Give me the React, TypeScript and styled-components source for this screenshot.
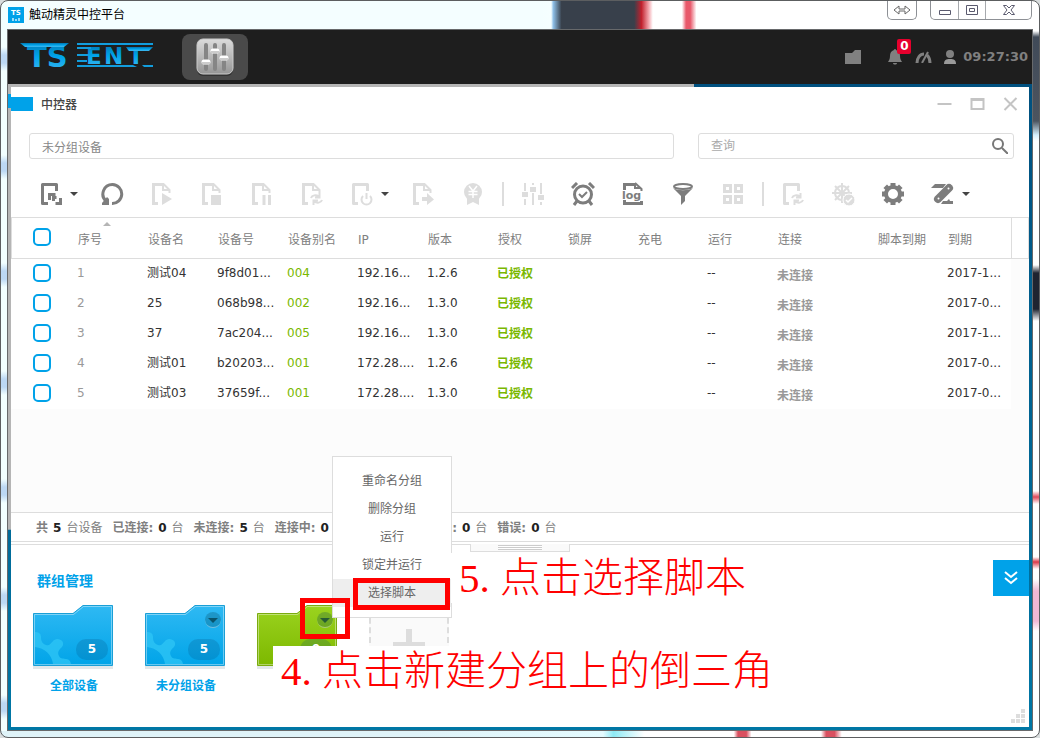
import React from "react";
import styled, { createGlobalStyle } from "styled-components";

const GlobalStyle = createGlobalStyle`
  * { box-sizing: border-box; }
  body {
    margin: 0;
    background: #d8dcdd;
    font: 12px/16px "DejaVu Sans", "Noto Sans CJK SC", sans-serif;
    color: #333;
  }
  button, input { font: inherit; color: inherit; margin: 0; padding: 0; }
  button { border: 0; background: none; cursor: pointer; }
  svg { display: block; }
`;

/* ---------- desktop window frame ---------- */

const Window = styled.div`
  min-height: 100vh;
  display: flex;
  flex-direction: column;
  padding: 0 6px 6px;
  border: 1px solid #5c5e60;
  border-radius: 8px;
  background:
    linear-gradient(90deg, transparent 53%, #8fc0e8 53.2%, #38404b 54%, #38404b 61%, #c0202d 61.7%, #f3a6ae 62.4%, transparent 62.8%, transparent 65.6%, #e8586a 66%, #e8586a 66.4%, transparent 67%) 0 0 / 100% 28px no-repeat,
    linear-gradient(#fff 30px, #404a58 36px, #4c545f 120px, #d5effc 134px, #fff 140px, #fff 264px, #1f2430 272px, #1f2430 308px, #fff 320px, #fff 490px, #e04a5a 496px, #fff 503px, #fff 556px, #d93848 561px, #fff 568px, #fff 578px, #f0b8d4 590px, #f0b8d4 620px, #fff 630px) 100% 0 / 6px 100% no-repeat,
    linear-gradient(90deg, #dff3f8 40%, #e4fbff 58%, #8eeaf5 59%, #fff 62%, #fff 70.6%, #d95060 71%, #d95060 71.8%, #fff 72.3%, #fff 79%, #d95060 79.5%, #d95060 80.3%, #fff 81%) 0 100% / 100% 6px no-repeat,
    repeating-linear-gradient(#f2ffff 0 46px, #bcd8f4 54px 62px, #f2ffff 70px 108px) 0 0 / 6px 100% no-repeat,
    linear-gradient(90deg, #f4feff, #f4feff 52%, #fff 60%);
`;

const TitleBar = styled.header`
  height: 28px;
  display: flex;
  align-items: center;
  gap: 5px;
  padding: 0 1px;
  color: #000;
`;

const FrameButtons = styled.div`
  align-self: flex-start;
  display: flex;
  border: 1px solid #8d9095;
  border-top: 0;
  border-radius: 0 0 5px 5px;
  background: #fff;
  &:first-of-type { margin-left: auto; margin-right: 8px; }
`;

const FrameButton = styled.button<{ $w: number }>`
  width: ${(p) => p.$w}px;
  height: 18px;
  display: grid;
  place-items: center;
  & + & { border-left: 1px solid #a6a9ad; }
`;

const Client = styled.div`
  flex: 1;
  display: flex;
  flex-direction: column;
  border: 1px solid #67696b;
`;

const TopBar = styled.div`
  height: 54px;
  display: flex;
  align-items: center;
  padding: 0 4px 0 12px;
  background: #1e1e1e;
  color: #808080;
`;

const AppTile = styled.button`
  width: 66px;
  height: 46px;
  margin-left: 28px;
  display: grid;
  place-items: center;
  border-radius: 8px;
  background: #4a4a4a;
`;

const Tray = styled.div`
  margin-left: auto;
  display: flex;
  align-items: center;
  gap: 12px;
`;

const TrayButton = styled.button<{ $wide?: boolean }>`
  position: relative;
  margin-right: ${(p) => (p.$wide ? 14 : 0)}px;
`;

const Badge = styled.span`
  position: absolute;
  left: 10px;
  top: -10px;
  width: 14px;
  height: 15px;
  border-radius: 2px;
  background: #e6002d;
  color: #fff;
  font-weight: bold;
  line-height: 15px;
  text-align: center;
`;

const Clock = styled.time`
  margin-left: -5px;
  font-size: 13px;
  font-weight: bold;
`;

const Desktop = styled.div`
  flex: 1;
  display: flex;
  padding: 3px;
  background:
    linear-gradient(#b5b5b5, #b5b5b5) 0 0 / 67% 69% no-repeat,
    linear-gradient(#00507f, #0077a5);
`;

/* ---------- controller panel ---------- */

const Panel = styled.main`
  flex: 1;
  min-width: 0;
  display: flex;
  flex-direction: column;
  background: #fff;
`;

const PanelHead = styled.div`
  height: 46px;
  display: flex;
  align-items: flex-start;
  padding: 10px 11px 0 0;
`;

const Marker = styled.span`
  position: relative;
  width: 22px;
  height: 14px;
  margin-right: 8px;
  background: #00a2e9;
  &::before {
    content: "";
    position: absolute;
    left: -3px;
    top: -3px;
    width: 3px;
    height: 14px;
    background: #00a2e9;
  }
`;

const PanelTitle = styled.h1`
  margin: 0 auto 0 0;
  font-size: 12px;
  line-height: 16px;
  font-weight: 500;
  color: #444;
`;

const PanelControls = styled.div`
  display: flex;
  gap: 18px;
`;

const Filters = styled.div`
  display: grid;
  grid-template-columns: 645fr 316fr;
  gap: 24px;
  padding: 0 15px 0 18px;
`;

const Field = styled.label`
  min-width: 0;
  height: 26px;
  display: flex;
  align-items: center;
  padding: 0 5px 0 12px;
  border: 1px solid #ddd;
  border-radius: 3px;
`;

const TextInput = styled.input`
  flex: 1;
  min-width: 0;
  height: 24px;
  border: 0;
  outline: 0;
  background: none;
  color: #888;
  &::placeholder { color: #aaa; opacity: 1; }
`;

const Toolbar = styled.div`
  height: 58px;
  display: flex;
  align-items: center;
  padding: 12px 0 0 15px;
`;

const Tool = styled.button<{ $off?: boolean; $menu?: boolean }>`
  flex: none;
  width: ${(p) => (p.$menu ? 61 : 50)}px;
  height: 30px;
  display: flex;
  align-items: center;
  gap: 7px;
  padding-left: 13px;
  color: ${(p) => (p.$off ? "#ddd" : "#7d7d7d")};
`;

const Divider = styled.span`
  flex: none;
  width: 2px;
  height: 24px;
  margin: 0 4px;
  background: #ddd;
`;

const DeviceArea = styled.div`
  flex: 1;
  background: #fcfcfc;
`;

const Table = styled.table`
  width: 100%;
  table-layout: fixed;
  border-spacing: 0;
  border-collapse: separate;
`;

const Th = styled.th`
  position: relative;
  height: 42px;
  padding: 4px 0 0 11px;
  border: 1px solid #ddd;
  border-width: 1px 0;
  background: #fff;
  font-weight: normal;
  text-align: left;
  white-space: nowrap;
  color: #808080;
  &:first-child { padding: 0 0 2px 21px; border-left-width: 1px; }
  &:last-child { border-left-width: 1px; border-right-width: 1px; }
`;

const SortMark = styled.span`
  position: absolute;
  left: 36px;
  top: 4px;
  border: 4px solid transparent;
  border-top: 0;
  border-bottom-color: #b5b5b5;
`;

type Tone = "dim" | "green" | "grant" | "link" | "text";
const tones: Record<Tone, string> = {
  dim: "#999",
  green: "#7ab800",
  grant: "#7ab800",
  link: "#999",
  text: "#333",
};
const cellPadding: Record<Tone, string> = {
  dim: "0 0 2px 10px",
  green: "0 0 2px 10px",
  grant: "0 0 0 10px",
  link: "4px 0 0 10px",
  text: "0 0 2px 10px",
};

const Td = styled.td<{ $tone?: Tone }>`
  height: 30px;
  padding: ${(p) => cellPadding[p.$tone ?? "text"]};
  background: #fff;
  color: ${(p) => tones[p.$tone ?? "text"]};
  font-weight: ${(p) => (p.$tone === "link" || p.$tone === "grant" ? 700 : 400)};
  white-space: nowrap;
  overflow: hidden;
  &:first-child { padding-left: 22px; }
  &:last-child { background: #fcfcfc; }
`;

const Check = styled.input`
  appearance: none;
  display: block;
  width: 18px;
  height: 18px;
  border: 2px solid #00a2e9;
  border-radius: 5px;
  background: #fff;
`;

const StatusBar = styled.div`
  height: 30px;
  display: flex;
  align-items: center;
  gap: 10px;
  padding: 2px 0 0 25px;
  border: 1px solid #ddd;
  border-width: 1px 0;
  color: #808080;
`;

const Stat = styled.span`
  display: flex;
  gap: 5px;
  white-space: nowrap;
  b { color: #222; }
`;

const StatLabel = styled.span<{ $width?: number }>`
  min-width: ${(p) => p.$width ?? 0}px;
  font-weight: bold;
  text-align: right;
`;

const StatUnit = styled.span`
  min-width: 12px;
`;

/* ---------- groups ---------- */

const Groups = styled.section`
  position: relative;
  min-height: 183px;
  margin-top: 2px;
  padding-top: 15px;
  border-top: 1px solid #ddd;
`;

const Splitter = styled.div`
  position: absolute;
  top: -1px;
  left: 50%;
  width: 100px;
  height: 8px;
  margin-left: -50px;
  border: 1px solid #ddd;
  border-top: 0;
  background: #fafafa;
  &::after {
    content: "";
    display: block;
    width: 44px;
    height: 5px;
    margin: 1px auto 0;
    background: repeating-linear-gradient(#ccc 0 1px, #fff 1px 2px);
  }
`;

const GroupHead = styled.div`
  display: flex;
  justify-content: space-between;
  padding-left: 26px;
`;

const GroupTitle = styled.h2`
  margin: 12px 0 0;
  font-size: 14px;
  line-height: 18px;
  font-weight: bold;
  color: #00a2e9;
`;

const Collapse = styled.button`
  width: 36px;
  height: 36px;
  display: grid;
  place-items: center;
  background: #00a2e9;
`;

const FolderRow = styled.div`
  display: flex;
  gap: 32px;
  padding: 9px 0 0 22px;
`;

const Folder = styled.div`
  position: relative;
  width: 80px;
  color: #00a2e9;
  text-align: center;
`;

const FolderName = styled.div`
  margin-top: 8px;
  padding-left: 2px;
  font-weight: bold;
`;

const FolderFace = styled.div`
  position: relative;
  height: 65px;
`;

const Count = styled.span`
  position: absolute;
  left: 43px;
  top: 34px;
  width: 32px;
  height: 21px;
  border-radius: 10px;
  background: rgba(0, 70, 120, 0.2);
  color: #fff;
  font-weight: bold;
  line-height: 21px;
`;

const DropButton = styled.button`
  position: absolute;
  left: 60px;
  top: 7px;
  width: 16px;
  height: 16px;
  border-radius: 50%;
  background: rgba(0, 60, 80, 0.25);
  border-bottom: 1px solid rgba(255, 255, 255, 0.4);
  &::after {
    content: "";
    display: block;
    margin: 1px auto 0;
    width: 0;
    border: 5px solid transparent;
    border-bottom: 0;
    border-top-color: rgba(0, 50, 60, 0.65);
  }
`;

const AddTile = styled.button`
  width: 80px;
  height: 64px;
  margin-top: 3px;
  display: grid;
  place-items: start center;
  padding-top: 19px;
  border: 2px dashed #ddd;
  background: #fafafa;
`;

const Menu = styled.div`
  position: absolute;
  z-index: 1;
  left: 75px;
  bottom: calc(100% - 13px);
  width: 120px;
  padding: 10px 0;
  border: 1px solid #ddd;
  background: #fff;
`;

const MenuItem = styled.button<{ $active?: boolean }>`
  display: block;
  width: 100%;
  height: 28px;
  background: ${(p) => (p.$active ? "#eee" : "transparent")};
  color: #666;
`;

const Note = styled.p<{ $x: number; $y: number }>`
  position: absolute;
  z-index: 2;
  left: ${(p) => p.$x}px;
  top: ${(p) => p.$y}px;
  margin: 0;
  padding: 0 8px;
  background: #fff;
  color: #f00;
  font: 300 41px/50px "Liberation Serif", "Noto Sans CJK SC", serif;
  white-space: nowrap;
`;

const Frame = styled.span<{ $x: number; $y: number; $w: number; $h: number }>`
  position: absolute;
  z-index: 3;
  left: ${(p) => p.$x}px;
  top: ${(p) => p.$y}px;
  width: ${(p) => p.$w}px;
  height: ${(p) => p.$h}px;
  border: 5px solid #f00;
  pointer-events: none;
`;

const Resize = styled.div`
  position: absolute;
  right: 4px;
  bottom: 4px;
`;

/* ---------- drawings ---------- */

const Svg = ({ w = 24, h = 24, children }: { w?: number; h?: number; children: React.ReactNode }) => (
  <svg width={w} height={h} viewBox={`0 0 ${w} ${h}`} fill="none" stroke="currentColor" strokeWidth="3" aria-hidden="true">
    {children}
  </svg>
);

const Caret = () => (
  <svg width="8" height="4" viewBox="0 0 8 4" fill="#444" aria-hidden="true">
    <path d="M0 0h8L4 4z" />
  </svg>
);

const Page = () => (
  <>
    <path d="M8 21.5H3.5V2.5H14" />
    <path d="M13 1v7h7M13.500 2l6 6v3" strokeWidth="2" />
  </>
);

const Cycle = () => (
  <path d="M11 16c1-3 5-3.500 8-1.500M19.500 11v4.500h-4.500M22 18c-1 3-5 3.500-8 1.500M13.500 23v-4.500h4.500" strokeWidth="2" />
);

const gearTeeth = Array.from({ length: 8 }, (_, i) => i * 45);

const icons: Record<string, React.ReactNode> = {
  group: (
    <>
      <path d="M9 21.500H3.500V2.500H17.500V9" strokeLinejoin="round" />
      <path d="M10.500 18v-5.500h6M14.500 19v-3.500h3M21.500 16v5.500h-5" />
    </>
  ),
  refresh: (
    <>
      <path d="M6 19A9.500 9.500 0 0 1 12.500 2.500A9.500 9.500 0 0 1 12 21.500" />
      <path d="M2 23v-2l5-6 2 2v6z" fill="currentColor" stroke="none" />
    </>
  ),
  play: (<><Page /><path d="M12 11v12l10-6z" fill="currentColor" stroke="none" /></>),
  stop: (<><Page /><path d="M11 13h10v10H11z" fill="currentColor" stroke="none" /></>),
  pause: (<><Page /><path d="M14 13v10M19.500 13v10" /></>),
  cycle: (<><Page /><Cycle /></>),
  power: (
    <>
      <path d="M8 21.500H3.500V2.500H17.500V9" strokeLinejoin="round" />
      <path d="M13 14a5 5 0 1 0 7 0M16.500 11v6" strokeWidth="2" />
    </>
  ),
  forward: (<><Page /><path d="M11 15h5v-4l7 6.500-7 5.500v-4h-5z" fill="currentColor" stroke="none" /></>),
  license: (
    <>
      <circle cx="12" cy="10" r="9" fill="currentColor" stroke="none" />
      <path d="M6 16v7l6-3 6 3v-7z" fill="currentColor" stroke="none" />
      <path d="M8 4l4 5 4-5M12 9v7M7.500 9.500h9M7.500 12.500h9" stroke="#fff" strokeWidth="1.500" />
    </>
  ),
  sliders: (
    <>
      <path d="M4 1v8M4 17v6M12 1v2M12 11v12M20 1v11M20 20v3" strokeWidth="2" />
      <path d="M1 10h6v5H1zM9 5h6v5H9zM17 13h6v5h-6z" fill="currentColor" stroke="none" />
    </>
  ),
  alarm: (
    <>
      <circle cx="12" cy="12.500" r="8.500" />
      <path d="M1 6l5-5M23 6l-5-5M6 19l-3 4M18 19l3 4" />
      <path d="M8 12l3 3 5-5" strokeWidth="2" />
    </>
  ),
  log: (
    <>
      <path d="M3.500 8V2.500H15" />
      <path d="M14 1v5h6M14 1l6.500 6v2" strokeWidth="2" />
      <path d="M3.500 18v3.500H20.500V19" />
      <text x="1" y="17" fontFamily="DejaVu Sans" fontWeight="bold" fontSize="11" fill="currentColor" stroke="none">log</text>
    </>
  ),
  filter: (
    <>
      <ellipse cx="12" cy="4.500" rx="9" ry="2.500" strokeWidth="2" />
      <path d="M2 6c4 3 16 3 20 0l-8 8v5l-4 4v-9z" fill="currentColor" stroke="none" />
    </>
  ),
  grid: <path d="M3.500 3.500h6v6h-6zM14.500 3.500h6v6h-6zM3.500 14.500h6v6h-6zM14.500 14.500h6v6h-6z" />,
  sync: (<><path d="M8 21.500H3.500V2.500H17.500V9" strokeLinejoin="round" /><Cycle /></>),
  wheel: (
    <>
      <circle cx="11" cy="11" r="7" strokeWidth="2" />
      <path d="M11 1v20M1 11h20M4 4l14 14M18 4L4 18" strokeWidth="2" />
      <circle cx="18" cy="18" r="6" fill="currentColor" stroke="#fff" strokeWidth="1" />
      <path d="M15 18l2 2 4-4" stroke="#fff" strokeWidth="1.500" />
    </>
  ),
  gear: (
    <>
      <circle cx="12" cy="12" r="7" strokeWidth="4" />
      {gearTeeth.map((a) => (
        <path key={a} d="M12 1v4" strokeWidth="5" transform={`rotate(${a} 12 12)`} />
      ))}
    </>
  ),
  edit: (
    <>
      <path d="M0 6l4-4h11l-3 4zM12 19h4l2-2 1 2h3v3H10z" fill="currentColor" stroke="none" />
      <path d="M7 17L18 6" strokeWidth="8" strokeLinecap="round" />
      <circle cx="17.500" cy="6.500" r="1" fill="#fff" stroke="none" />
      <circle cx="7.500" cy="16.500" r="1" fill="#fff" stroke="none" />
    </>
  ),
};

const Logo = () => (
  <svg width="134" height="34" viewBox="0 0 134 34" role="img" aria-label="TS ENT">
    <defs>
      <linearGradient id="brand" x1="0" y1="0" x2="0" y2="1">
        <stop offset="0" stopColor="#0074ad" />
        <stop offset="0.5" stopColor="#00a5ec" />
        <stop offset="1" stopColor="#45b8ee" />
      </linearGradient>
    </defs>
    <g fill="url(#brand)" fontFamily="DejaVu Sans, sans-serif" fontWeight="bold">
      <text x="7" y="27" fontSize="29">TS</text>
      <text x="66" y="24" fontSize="23"><tspan>E</tspan><tspan x="84">N</tspan><tspan x="108">T</tspan></text>
      <path d="M0 3h49l-5 4H5z" />
      <path d="M106 7h27l-4 4h-20z" />
    </g>
    <g fill="#129ddd">
      <path d="M57 3h76v2H57zM57 25h56l4 2H57zM122 25h11v2h-9z" />
      <path d="M57 7h14v2H57zM57 14h12v2H57zM57 20h10v2H57z" />
    </g>
  </svg>
);

const MixerIcon = () => (
  <svg width="38" height="38" viewBox="0 0 38 38" aria-hidden="true">
    <defs>
      <linearGradient id="plate" x1="0" y1="0" x2="0" y2="1">
        <stop offset="0" stopColor="#dcdcdc" />
        <stop offset="1" stopColor="#969696" />
      </linearGradient>
    </defs>
    <rect x="1" y="2" width="36" height="36" rx="6" fill="#333" />
    <rect x="1" y="1" width="36" height="35" rx="6" fill="url(#plate)" stroke="#ccc" strokeWidth="1" />
    <path d="M10 7v24M19 7v24M28 7v24" stroke="#858585" strokeWidth="4" strokeLinecap="round" />
    <path d="M8 24h4M17 13h4M26 20h4" stroke="#fff" strokeWidth="5" strokeLinecap="round" />
    <path d="M6 25h8M15 14h8M24 21h8" stroke="#ccc" strokeWidth="2" />
  </svg>
);

const FolderArt = ({ id, from, to, edge, gear }: { id: string; from: string; to: string; edge: string; gear?: boolean }) => (
  <svg width="80" height="65" viewBox="0 0 80 65" aria-hidden="true">
    <defs>
      <linearGradient id={id} x1="0" y1="0" x2="0" y2="1">
        <stop offset="0" stopColor={from} />
        <stop offset="1" stopColor={to} />
      </linearGradient>
    </defs>
    <path d="M0 61h80v3H0z" fill="#e3e8ea" />
    <path d="M0.500 8.500H40L50 0.500H79.500V60.500H0.500z" fill={`url(#${id})`} stroke={edge} />
    <path d="M1.500 59.500V9.500H40.500L50.500 1.500H78.500V59.500z" fill="none" stroke="#fff" strokeOpacity="0.400" />
    {gear && (
      <path
        d="M2 27c3 0 6 1 6 5 0 5 2 7 5 8 5 2 5-5 11-6 5 0 8 4 5 8-3 3-5 5-3 9 2 5 11 0 12 8H20c-1-9-8-16-18-17z"
        fill="#2fc6f5"
        fillOpacity="0.750"
      />
    )}
  </svg>
);

/* ---------- data ---------- */

const columns = ["序号", "设备名", "设备号", "设备别名", "IP", "版本", "授权", "锁屏", "充电", "运行", "连接", "脚本到期", "到期"];
const widths = [56, 70, 70, 70, 70, 70, 70, 70, 70, 70, 70, 100, 70, 74];

const devices = [
  ["1", "测试04", "9f8d01...", "004", "192.16...", "1.2.6", "2017-1..."],
  ["2", "25", "068b98...", "002", "192.16...", "1.3.0", "2017-0..."],
  ["3", "37", "7ac204...", "005", "192.16...", "1.3.0", "2017-1..."],
  ["4", "测试01", "b20203...", "001", "172.28....", "1.2.6", "2017-0..."],
  ["5", "测试03", "37659f...", "001", "172.28....", "1.3.0", "2017-0..."],
];

type ToolSpec = { icon: string; label: string; off?: boolean; menu?: boolean } | null;
const tools: ToolSpec[] = [
  { icon: "group", label: "分组", menu: true },
  { icon: "refresh", label: "刷新" },
  { icon: "play", label: "运行脚本", off: true },
  { icon: "stop", label: "停止脚本", off: true },
  { icon: "pause", label: "暂停脚本", off: true },
  { icon: "cycle", label: "更换脚本", off: true },
  { icon: "power", label: "电源", off: true, menu: true },
  { icon: "forward", label: "发送文件", off: true },
  { icon: "license", label: "授权", off: true },
  null,
  { icon: "sliders", label: "参数", off: true },
  { icon: "alarm", label: "定时" },
  { icon: "log", label: "日志" },
  { icon: "filter", label: "筛选" },
  { icon: "grid", label: "网格", off: true },
  null,
  { icon: "sync", label: "同步", off: true },
  { icon: "wheel", label: "控制", off: true },
  { icon: "gear", label: "设置" },
  { icon: "edit", label: "编辑", menu: true },
];

type StatSpec = { label: string; count: number; unit: string; labelWidth?: number };
const stats: StatSpec[] = [
  { label: "共", count: 5, unit: "台设备" },
  { label: "已连接:", count: 0, unit: "台" },
  { label: "未连接:", count: 5, unit: "台" },
  { label: "连接中:", count: 0, unit: "" },
  { label: ":", count: 0, unit: "台", labelWidth: 101 },
  { label: "错误:", count: 0, unit: "台" },
];

const menuItems = ["重命名分组", "删除分组", "运行", "锁定并运行", "选择脚本"];

const panelControls = [
  ["最小化", "M0 7h14"],
  ["最大化", "M1 2v10h12V2zM0 3h14"],
  ["关闭", "M1 1l12 12M13 1L1 13"],
];

export default function App() {
  return (
    <>
      <GlobalStyle />
      <Window>
        <TitleBar>
          <svg width="16" height="16" viewBox="0 0 16 16" aria-hidden="true">
            <rect width="16" height="16" fill="#00a2e9" />
            <text x="3" y="8" fontSize="7" fontWeight="bold" fill="#fff" fontFamily="DejaVu Sans">TS</text>
            <path d="M4 11h2v3H4zM7 12h2v2H7zM10 11h2v3h-2z" fill="#9adcf8" />
          </svg>
          <span>触动精灵中控平台</span>
          <FrameButtons>
            <FrameButton $w={28} aria-label="切换">
              <svg width="18" height="10" viewBox="0 0 18 10" fill="#fff" stroke="#666"><path d="M1 5l5-4v3h6V1l5 4-5 4V6H6v3z" /></svg>
            </FrameButton>
          </FrameButtons>
          <FrameButtons>
            <FrameButton $w={27} aria-label="最小化">
              <svg width="12" height="10" viewBox="0 0 12 10" fill="#fff" stroke="#5a5a6e"><path d="M.5 5.500h11v4H.5z" /></svg>
            </FrameButton>
            <FrameButton $w={27} aria-label="最大化">
              <svg width="12" height="10" viewBox="0 0 12 10" fill="#fff" stroke="#5a5a6e"><path d="M.5 .5h11v9H.5zM3.500 3.500h5v3h-5z" /></svg>
            </FrameButton>
            <FrameButton $w={46} aria-label="关闭">
              <svg width="12" height="10" viewBox="0 0 12 10" fill="#fff" stroke="#5a5a6e"><path d="M.5 .5h3L6 3l2.500-2.500h3L8 5l3.500 4.500h-3L6 7 3.500 9.500h-3L4 5z" /></svg>
            </FrameButton>
          </FrameButtons>
        </TitleBar>

        <Client>
          <TopBar>
            <Logo />
            <AppTile aria-label="中控器"><MixerIcon /></AppTile>
            <Tray>
              <TrayButton $wide aria-label="文件">
                <svg width="16" height="14" viewBox="0 0 16 14" fill="currentColor"><path d="M0 3h7l3-3h6v14H0z" /></svg>
              </TrayButton>
              <TrayButton aria-label="通知">
                <svg width="16" height="16" viewBox="0 0 16 16" fill="currentColor"><path d="M8 0c1 0 1 1 1 1 3 1 4 3 4 6 0 3 1 4 2 6H1c1-2 2-3 2-6 0-3 1-5 4-6 0 0 0-1 1-1zM6 14h4c0 2-4 2-4 0z" /></svg>
                <Badge>0</Badge>
              </TrayButton>
              <TrayButton aria-label="性能">
                <svg width="17" height="12" viewBox="0 0 17 12" fill="none" stroke="currentColor" strokeWidth="3"><path d="M2 12c0-5 3-9 7-9M12 4c2 2 3 4 3 8" /><path d="M7 12l6-11" strokeWidth="2" /></svg>
              </TrayButton>
              <TrayButton aria-label="用户">
                <svg width="12" height="14" viewBox="0 0 12 14" fill="currentColor"><circle cx="6" cy="4" r="4" /><path d="M0 14c0-4 2-5 6-5s6 1 6 5z" fill="#999" /></svg>
              </TrayButton>
              <Clock>09:27:30</Clock>
            </Tray>
          </TopBar>

          <Desktop>
            <Panel>
              <PanelHead>
                <Marker />
                <PanelTitle>中控器</PanelTitle>
                <PanelControls>
                  {panelControls.map(([label, d]) => (
                    <button key={label} aria-label={label}>
                      <svg width="15" height="14" viewBox="0 0 14 14" fill="none" stroke="#c4c4c4" strokeWidth="2"><path d={d} /></svg>
                    </button>
                  ))}
                </PanelControls>
              </PanelHead>

              <Filters>
                <Field><TextInput aria-label="分组" defaultValue="未分组设备" /></Field>
                <Field>
                  <TextInput aria-label="查询" placeholder="查询" />
                  <svg width="16" height="16" viewBox="0 0 16 16" fill="none" stroke="#777" strokeWidth="2" aria-hidden="true"><circle cx="6" cy="6" r="5" /><path d="M10 10l6 6" /></svg>
                </Field>
              </Filters>

              <Toolbar>
                {tools.map((t, i) =>
                  t ? (
                    <Tool key={i} aria-label={t.label} $off={t.off} $menu={t.menu}>
                      <Svg>{icons[t.icon]}</Svg>
                      {t.menu && <Caret />}
                    </Tool>
                  ) : (
                    <Divider key={i} />
                  )
                )}
              </Toolbar>

              <DeviceArea>
                <Table>
                  <colgroup>
                    {widths.map((w, i) => <col key={i} width={w} />)}
                    <col />
                  </colgroup>
                  <thead>
                    <tr>
                      <Th><Check type="checkbox" aria-label="全选" /></Th>
                      {columns.map((c, i) => <Th key={c}>{c}{i === 0 && <SortMark />}</Th>)}
                      <Th aria-label="滚动" />
                    </tr>
                  </thead>
                  <tbody>
                    {devices.map(([no, name, id, alias, ip, version, expiry]) => (
                      <tr key={no}>
                        <Td><Check type="checkbox" aria-label={`选择 ${no}`} /></Td>
                        <Td $tone="dim">{no}</Td>
                        <Td>{name}</Td>
                        <Td>{id}</Td>
                        <Td $tone="green">{alias}</Td>
                        <Td>{ip}</Td>
                        <Td>{version}</Td>
                        <Td $tone="grant">已授权</Td>
                        <Td />
                        <Td />
                        <Td>--</Td>
                        <Td $tone="link">未连接</Td>
                        <Td />
                        <Td>{expiry}</Td>
                        <Td />
                      </tr>
                    ))}
                  </tbody>
                </Table>
              </DeviceArea>

              <StatusBar>
                {stats.map((s) => (
                  <Stat key={s.label}>
                    <StatLabel $width={s.labelWidth}>{s.label}</StatLabel>
                    <b>{s.count}</b>
                    <StatUnit>{s.unit}</StatUnit>
                  </Stat>
                ))}
              </StatusBar>

              <Groups>
                <Splitter />
                <GroupHead>
                  <GroupTitle>群组管理</GroupTitle>
                  <Collapse aria-label="收起">
                    <svg width="14" height="14" viewBox="0 0 14 14" fill="none" stroke="#fff" strokeWidth="2"><path d="M1 1l6 5 6-5M1 7l6 5 6-5" /></svg>
                  </Collapse>
                </GroupHead>
                <FolderRow>
                  <Folder>
                    <FolderFace>
                      <FolderArt id="all" from="#2fb9f3" to="#00a4e8" edge="#1a9fd6" gear />
                      <Count>5</Count>
                    </FolderFace>
                    <FolderName>全部设备</FolderName>
                  </Folder>
                  <Folder>
                    <FolderFace>
                      <FolderArt id="ungrouped" from="#2fb9f3" to="#00a4e8" edge="#1a9fd6" gear />
                      <Count>5</Count>
                      <DropButton aria-label="未分组设备菜单" />
                    </FolderFace>
                    <FolderName>未分组设备</FolderName>
                  </Folder>
                  <Folder>
                    <FolderFace>
                      <FolderArt id="fresh" from="#9bd31f" to="#7db800" edge="#7aab10" />
                      <Count>0</Count>
                      <DropButton aria-label="新建分组菜单" />
                      <Menu>
                        {menuItems.map((m, i) => <MenuItem key={m} $active={i === 4}>{m}</MenuItem>)}
                      </Menu>
                      <Note $x={194} $y={-52}>5. 点击选择脚本</Note>
                      <Note $x={16} $y={41}>4. 点击新建分组上的倒三角</Note>
                      <Frame $x={96} $y={-27} $w={97} $h={32} />
                      <Frame $x={43} $y={-7} $w={50} $h={41} />
                    </FolderFace>
                  </Folder>
                  <AddTile aria-label="新建分组">
                    <svg width="32" height="32" viewBox="0 0 32 32" stroke="#ddd" strokeWidth="6"><path d="M16 0v32M0 16h32" /></svg>
                  </AddTile>
                </FolderRow>
                <Resize>
                  <svg width="14" height="14" viewBox="0 0 14 14" fill="#ddd" aria-hidden="true"><path d="M10 0h4v4h-4zM5 5h4v4H5zM10 5h4v4h-4zM0 10h4v4H0zM5 10h4v4H5zM10 10h4v4h-4z" /></svg>
                </Resize>
              </Groups>
            </Panel>
          </Desktop>
        </Client>
      </Window>
    </>
  );
}
